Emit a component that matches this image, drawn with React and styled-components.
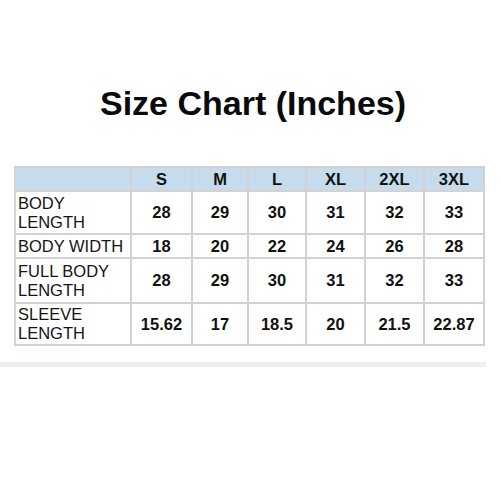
import { Fragment } from "react";
import styled, { createGlobalStyle } from "styled-components";

const GlobalStyle = createGlobalStyle`
  body {
    margin: 0;
    background: #ffffff;
    font-family: "Liberation Sans", Arial, sans-serif;
    color: #111111;
  }
`;

const sizes = ["S", "M", "L", "XL", "2XL", "3XL"];

const rows = [
  { label: ["BODY", "LENGTH"], values: ["28", "29", "30", "31", "32", "33"] },
  { label: ["BODY WIDTH"], values: ["18", "20", "22", "24", "26", "28"] },
  { label: ["FULL BODY", "LENGTH"], values: ["28", "29", "30", "31", "32", "33"] },
  { label: ["SLEEVE", "LENGTH"], values: ["15.62", "17", "18.5", "20", "21.5", "22.87"] },
];

function App() {
  return (
    <>
      <GlobalStyle />
      <Page>
        <Title>Size Chart (Inches)</Title>
        <Chart>
          <HeadCell />
          {sizes.map((s) => (
            <HeadCell key={s}>{s}</HeadCell>
          ))}
          {rows.map((row) => (
            <Fragment key={row.label.join(" ")}>
              <LabelCell>
                {row.label.map((line) => (
                  <span key={line}>{line}</span>
                ))}
              </LabelCell>
              {row.values.map((v, i) => (
                <ValueCell key={i}>{v}</ValueCell>
              ))}
            </Fragment>
          ))}
        </Chart>
        <Band />
      </Page>
    </>
  );
}

const Page = styled.div`
  width: 500px;
  height: 500px;
  padding-top: 84px;
  box-sizing: border-box;
  overflow: hidden;
`;

const Title = styled.h1`
  margin: 0 0 44px 6px;
  font-size: 34px;
  line-height: 38px;
  font-weight: 700;
  text-align: center;
  color: #0a0a0a;
`;

const Chart = styled.div`
  display: grid;
  grid-template-columns: 114px 59px 54px 56px 57px 57px 58px;
  grid-template-rows: 22px 41px 22px 43px 40px;
  gap: 2px;
  padding: 2px;
  margin-left: 14px;
  width: max-content;
  background: #d2d2d2;
`;

const HeadCell = styled.div`
  background: #c6dcec;
  display: flex;
  align-items: center;
  justify-content: center;
  font-size: 16.5px;
  font-weight: 700;
`;

const LabelCell = styled.div`
  background: #ffffff;
  display: flex;
  flex-direction: column;
  justify-content: center;
  padding-left: 2px;
  font-size: 16.5px;
  line-height: 19px;
  color: #141414;
`;

const ValueCell = styled.div`
  background: #ffffff;
  display: flex;
  align-items: center;
  justify-content: center;
  font-size: 16.5px;
  font-weight: 700;
`;

const Band = styled.div`
  margin-top: 16px;
  width: 486px;
  height: 5px;
  background: #efefef;
`;

export default App;
